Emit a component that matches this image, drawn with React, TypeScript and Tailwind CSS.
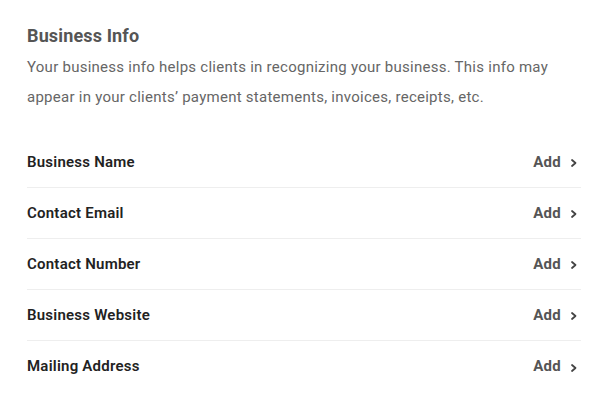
const rows = ["Business Name", "Contact Email", "Contact Number", "Business Website", "Mailing Address"];

function Chevron() {
    return (
        <svg width="8" height="10" viewBox="0 0 8 10" className="ml-[9px] mt-[2px]">
            <path d="M2 2 L5.5 5 L2 8" fill="none" stroke="#444" strokeWidth="1.8" strokeLinecap="round" strokeLinejoin="round" />
        </svg>
    );
}

export default function App() {
    return (
        <div className="w-[610px] h-[406px] bg-white px-[27px] pt-[24px] pr-[29px]" style={{ fontFamily: "Roboto, 'Liberation Sans', sans-serif" }}>
            <h1 className="text-[18px] leading-[24px] font-bold text-[#555] tracking-[0.15px]">Business Info</h1>
            <p className="mt-[4px] text-[15px] leading-[30px] text-[#666] tracking-[0.26px]">
                Your business info helps clients in recognizing your business. This info may appear in your clients’ payment statements, invoices, receipts, etc.
            </p>
            <div className="mt-[25px] flex flex-col">
                {rows.map((r, i) => (
                    <div
                        key={r}
                        className={`flex items-center justify-between h-[51px] ${i < rows.length - 1 ? "border-b border-[#eeeeee]" : ""}`}
                    >
                        <span className="text-[15px] font-semibold text-[#222] tracking-[0.23px]">{r}</span>
                        <button className="flex items-center text-[15px] font-bold text-[#555] tracking-[0.3px] pr-[3px]">
                            Add
                            <Chevron />
                        </button>
                    </div>
                ))}
            </div>
        </div>
    );
}
